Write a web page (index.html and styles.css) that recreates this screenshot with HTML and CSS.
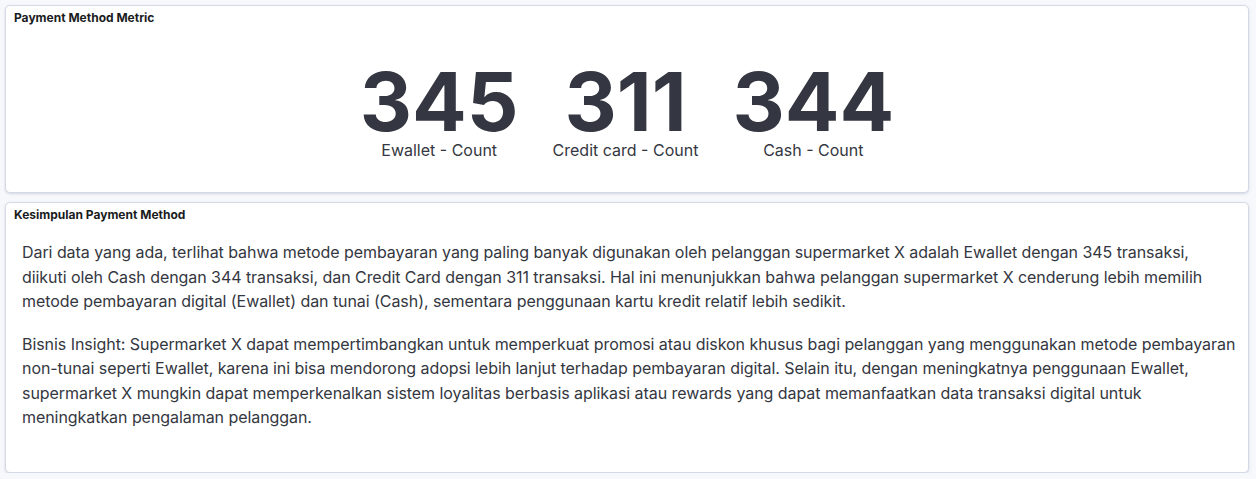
FILE: index.html
```html
<!DOCTYPE html>
<html>
<head>
<meta charset="utf-8">
<link rel="stylesheet" href="styles.css">
</head>
<body>
<div class="grid">
  <section class="panel panel-metric">
    <h2 class="panel-title">Payment Method Metric</h2>
    <div class="metric-body">
      <div class="metric">
        <div class="metric-value">345</div>
        <div class="metric-label">Ewallet - Count</div>
      </div>
      <div class="metric">
        <div class="metric-value">311</div>
        <div class="metric-label">Credit card - Count</div>
      </div>
      <div class="metric">
        <div class="metric-value">344</div>
        <div class="metric-label">Cash - Count</div>
      </div>
    </div>
  </section>
  <section class="panel panel-text">
    <h2 class="panel-title">Kesimpulan Payment Method</h2>
    <div class="markdown">
      <p>Dari data yang ada, terlihat bahwa metode pembayaran yang paling banyak digunakan oleh pelanggan supermarket X adalah Ewallet dengan 345 transaksi,<br>diikuti oleh Cash dengan 344 transaksi, dan Credit Card dengan 311 transaksi. Hal ini menunjukkan bahwa pelanggan supermarket X cenderung lebih memilih metode pembayaran digital (Ewallet) dan tunai (Cash), sementara penggunaan kartu kredit relatif lebih sedikit.</p>
      <p>Bisnis Insight: Supermarket X dapat mempertimbangkan untuk memperkuat promosi atau diskon khusus bagi pelanggan yang menggunakan metode pembayaran non-tunai seperti Ewallet, karena ini bisa mendorong adopsi lebih lanjut terhadap pembayaran digital. Selain itu, dengan meningkatnya penggunaan Ewallet, supermarket X mungkin dapat memperkenalkan sistem loyalitas berbasis aplikasi atau rewards yang dapat memanfaatkan data transaksi digital untuk meningkatkan pengalaman pelanggan.</p>
    </div>
  </section>
</div>
</body>
</html>
```
FILE: styles.css
```css
html, body {
  margin: 0;
  padding: 0;
  background: #f7f8fc;
  font-family: Inter, "Liberation Sans", sans-serif;
  color: #343741;
}
.grid {
  display: flex;
  flex-direction: column;
  gap: 9px;
  padding: 5px 7px 0 5px;
}
.panel {
  background: #fff;
  border: 1px solid #d3dae6;
  border-radius: 5px;
  box-shadow: 0 1px 2px rgba(152, 162, 179, 0.25), 0 1px 3px rgba(152, 162, 179, 0.15);
  box-sizing: border-box;
  display: flex;
  flex-direction: column;
}
.panel-metric {
  height: 188px;
}
.panel-text {
  height: 271px;
}
.panel-title {
  margin: 0;
  padding: 4px 8px 0 8px;
  font-size: 12px;
  line-height: 16px;
  font-weight: 700;
  color: #1a1c21;
}
.metric-body {
  flex: 1;
  display: flex;
  justify-content: center;
  align-items: center;
  gap: 34px;
  padding-top: 6px;
}
.metric {
  display: flex;
  flex-direction: column;
  align-items: center;
}
.metric-value {
  font-size: 81px;
  font-weight: 700;
  line-height: 76px;
  color: #343741;
  letter-spacing: 0;
}
.metric-label {
  font-size: 16px;
  line-height: 20px;
  color: #343741;
}
.markdown {
  padding: 17px 8px 0 16px;
  font-size: 16px;
  line-height: 24.5px;
  letter-spacing: -0.06px;
  color: #343741;
}
.markdown p {
  margin: 0 0 18px 0;
}
```
